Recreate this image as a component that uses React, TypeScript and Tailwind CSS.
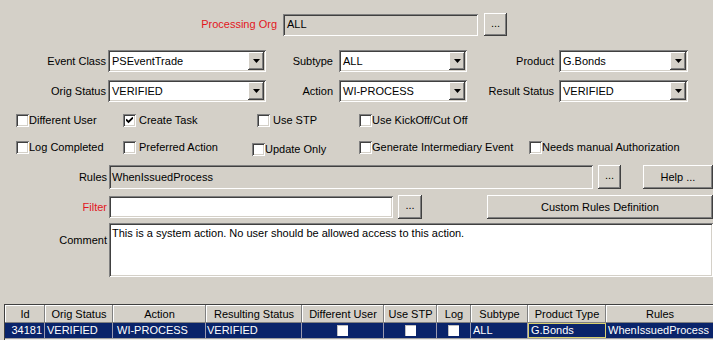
import React from "react";

const sunken =
  "shadow-[inset_1px_1px_0_#808080,inset_-1px_-1px_0_#ffffff,inset_2px_2px_0_#404040,inset_-2px_-2px_0_#d4d0c8]";
const raised =
  "shadow-[inset_-1px_-1px_0_#404040,inset_1px_1px_0_#ffffff,inset_-2px_-2px_0_#808080]";

function Label({ w, red, children, gap }: { w: string; red?: boolean; children: React.ReactNode; gap: string }) {
  return (
    <div className={`${w} ${gap} shrink-0 text-right whitespace-nowrap ${red ? "text-[#e2161c]" : "text-black"}`}>
      {children}
    </div>
  );
}

function Combo({ w, value }: { w: string; value: string }) {
  return (
    <div className={`${w} h-[22px] shrink-0 bg-white ${sunken} flex items-stretch p-[2px]`}>
      <div className="flex-1 pl-[2px] flex items-center whitespace-nowrap overflow-hidden">{value}</div>
      <div className={`w-[16px] bg-[#d4d0c8] ${raised} flex items-center justify-center`}>
        <svg width="7" height="4" viewBox="0 0 7 4">
          <path d="M0 0H7L3.5 4Z" fill="#000" />
        </svg>
      </div>
    </div>
  );
}

function Btn({ w, h, children }: { w: string; h: string; children: React.ReactNode }) {
  return (
    <div className={`${w} ${h} shrink-0 bg-[#d4d0c8] ${raised} flex items-center justify-center whitespace-nowrap`}>
      {children}
    </div>
  );
}

function Box({ checked }: { checked?: boolean }) {
  return (
    <div className={`w-[13px] h-[13px] shrink-0 bg-white ${sunken} flex items-center justify-center`}>
      {checked && (
        <svg width="7" height="7" viewBox="0 0 7 7">
          <path d="M0 2.5L2.5 5L7 0.5" stroke="#000" strokeWidth="1.8" fill="none" />
        </svg>
      )}
    </div>
  );
}

function Check({ w, label, checked, gap, shift }: { w: string; label: string; checked?: boolean; gap: string; shift?: string }) {
  return (
    <div className={`${w} shrink-0 flex items-center ${shift ?? ""}`}>
      <Box checked={checked} />
      <span className={`${gap} whitespace-nowrap leading-[13px]`}>{label}</span>
    </div>
  );
}

const cols: { name: string; w: string }[] = [
  { name: "Id", w: "w-[40px]" },
  { name: "Orig Status", w: "w-[68px]" },
  { name: "Action", w: "w-[93px]" },
  { name: "Resulting Status", w: "w-[96px]" },
  { name: "Different User", w: "w-[82px]" },
  { name: "Use STP", w: "w-[53px]" },
  { name: "Log", w: "w-[34px]" },
  { name: "Subtype", w: "w-[57px]" },
  { name: "Product Type", w: "w-[78px]" },
  { name: "Rules", w: "w-[108px]" },
];

function CellBox() {
  return <div className="w-[11px] h-[11px] bg-white shadow-[inset_1px_1px_0_#c0c0c0]" />;
}

export default function App() {
  return (
    <div className="w-[713px] h-[340px] overflow-hidden bg-[#d4d0c8] font-['Liberation_Sans',Arial,sans-serif] text-[11px] text-black flex flex-col">
      {/* Processing Org */}
      <div className="mt-[13px] h-[23px] flex items-center">
        <Label w="w-[277px]" gap="mr-[6px]" red>
          Processing Org
        </Label>
        <div className={`w-[195px] h-[22px] ${sunken} pl-[4px] flex items-center`}>ALL</div>
        <div className="ml-[6px]">
          <Btn w="w-[23px]" h="h-[23px]">
            <span className="-mt-[3px]">...</span>
          </Btn>
        </div>
      </div>

      {/* Row 1 */}
      <div className="mt-[14px] h-[22px] flex items-center">
        <Label w="w-[106px]" gap="mr-[2px]">Event Class</Label>
        <Combo w="w-[158px]" value="PSEventTrade" />
        <Label w="w-[67px]" gap="mr-[6px]">Subtype</Label>
        <Combo w="w-[128px]" value="ALL" />
        <Label w="w-[87px]" gap="mr-[5px]">Product</Label>
        <Combo w="w-[129px]" value="G.Bonds" />
      </div>

      {/* Row 2 */}
      <div className="mt-[8px] h-[22px] flex items-center">
        <Label w="w-[106px]" gap="mr-[2px]">Orig Status</Label>
        <Combo w="w-[158px]" value="VERIFIED" />
        <Label w="w-[67px]" gap="mr-[6px]">Action</Label>
        <Combo w="w-[128px]" value="WI-PROCESS" />
        <Label w="w-[87px]" gap="mr-[5px]">Result Status</Label>
        <Combo w="w-[129px]" value="VERIFIED" />
      </div>

      {/* Checkbox row 1 */}
      <div className="mt-[12px] h-[13px] pl-[16px] flex items-center">
        <Check w="w-[107px]" label="Different User" gap="ml-0" />
        <Check w="w-[134px]" label="Create Task" gap="ml-[3px]" checked />
        <Check w="w-[102px]" label="Use STP" gap="ml-[3px]" />
        <Check w="w-[200px]" label="Use KickOff/Cut Off" gap="ml-0" />
      </div>

      {/* Checkbox row 2 */}
      <div className="mt-[14px] h-[13px] pl-[16px] flex items-center">
        <Check w="w-[107px]" label="Log Completed" gap="ml-0" />
        <Check w="w-[129px]" label="Preferred Action" gap="ml-[3px]" />
        <Check w="w-[107px]" label="Update Only" gap="ml-0" shift="translate-y-[2px]" />
        <Check w="w-[170px]" label="Generate Intermediary Event" gap="ml-0" />
        <Check w="w-[180px]" label="Needs manual Authorization" gap="ml-0" />
      </div>

      {/* Rules */}
      <div className="mt-[11px] h-[24px] flex items-center">
        <Label w="w-[107px]" gap="mr-[2px]">Rules</Label>
        <div className={`w-[484px] h-[24px] ${sunken} pl-[3px] flex items-center`}>WhenIssuedProcess</div>
        <div className="ml-[5px]">
          <Btn w="w-[23px]" h="h-[24px]">
            <span className="-mt-[3px]">...</span>
          </Btn>
        </div>
        <div className="ml-[22px]">
          <Btn w="w-[70px]" h="h-[24px]">
            Help ...
          </Btn>
        </div>
      </div>

      {/* Filter */}
      <div className="mt-[6px] h-[24px] flex items-center">
        <Label w="w-[107px]" gap="mr-[2px]" red>
          Filter
        </Label>
        <div className={`w-[284px] h-[22px] bg-white ${sunken}`} />
        <div className="ml-[5px]">
          <Btn w="w-[24px]" h="h-[24px]">
            <span className="-mt-[3px]">...</span>
          </Btn>
        </div>
        <div className="ml-[65px]">
          <Btn w="w-[226px]" h="h-[24px]">
            Custom Rules Definition
          </Btn>
        </div>
      </div>

      {/* Comment */}
      <div className="mt-[4px] h-[54px] flex items-start">
        <Label w="w-[107px]" gap="mr-[2px] mt-[9px]">Comment</Label>
        <div className={`w-[606px] h-[54px] bg-white ${sunken} pl-[3px] pt-[4px] leading-[13px]`}>
          This is a system action. No user should be allowed access to this action.
        </div>
      </div>

      {/* Table */}
      <div className="mt-[27px] ml-[4px] flex-1 flex flex-col shadow-[inset_1px_1px_0_#404040] pl-[1px] pt-[1px]">
        <div className="flex h-[18px]">
          {cols.map((c) => (
            <div
              key={c.name}
              className={`${c.w} shrink-0 h-[18px] bg-[#d4d0c8] shadow-[inset_-1px_-1px_0_#808080,inset_1px_1px_0_#ffffff] flex items-center justify-center whitespace-nowrap overflow-hidden`}
            >
              {c.name}
            </div>
          ))}
        </div>
        <div className="flex h-[15px] bg-[#0a246a] text-white">
          <div className="w-[40px] shrink-0 text-right pr-[2px] border-r border-[#9a9ab0] leading-[15px]">34181</div>
          <div className="w-[68px] shrink-0 pl-[2px] border-r border-[#9a9ab0] leading-[15px]">VERIFIED</div>
          <div className="w-[93px] shrink-0 pl-[4px] border-r border-[#9a9ab0] leading-[15px]">WI-PROCESS</div>
          <div className="w-[96px] shrink-0 pl-[1px] border-r border-[#9a9ab0] leading-[15px]">VERIFIED</div>
          <div className="w-[82px] shrink-0 border-r border-[#9a9ab0] flex items-center justify-center">
            <CellBox />
          </div>
          <div className="w-[53px] shrink-0 border-r border-[#9a9ab0] flex items-center justify-center">
            <CellBox />
          </div>
          <div className="w-[34px] shrink-0 border-r border-[#9a9ab0] flex items-center justify-center">
            <CellBox />
          </div>
          <div className="w-[57px] shrink-0 pl-[2px] border-r border-[#9a9ab0] leading-[15px]">ALL</div>
          <div className="w-[78px] shrink-0 pl-[2px] border border-[#d8d070] leading-[13px]">G.Bonds</div>
          <div className="w-[108px] shrink-0 pl-[2px] leading-[15px] whitespace-nowrap overflow-hidden">WhenIssuedProcess</div>
        </div>
        <div className="flex-1 bg-[#ecebe6] border-t border-[#a0a0a0]" />
      </div>
    </div>
  );
}
